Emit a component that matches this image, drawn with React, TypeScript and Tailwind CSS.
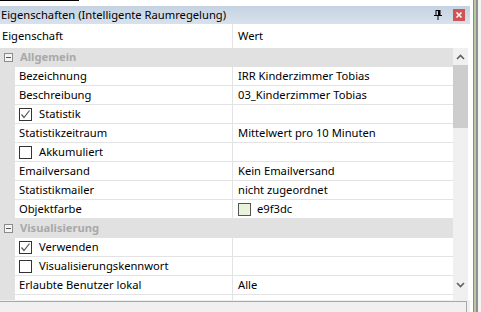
import React from "react";

type Row =
  | { kind: "group"; label: string }
  | { kind: "item"; name: string; value?: string; check?: boolean; color?: string };

const rows: Row[] = [
  { kind: "group", label: "Allgemein" },
  { kind: "item", name: "Bezeichnung", value: "IRR Kinderzimmer Tobias" },
  { kind: "item", name: "Beschreibung", value: "03_Kinderzimmer Tobias" },
  { kind: "item", name: "Statistik", check: true },
  { kind: "item", name: "Statistikzeitraum", value: "Mittelwert pro 10 Minuten" },
  { kind: "item", name: "Akkumuliert", check: false },
  { kind: "item", name: "Emailversand", value: "Kein Emailversand" },
  { kind: "item", name: "Statistikmailer", value: "nicht zugeordnet" },
  { kind: "item", name: "Objektfarbe", value: "e9f3dc", color: "#e9f3dc" },
  { kind: "group", label: "Visualisierung" },
  { kind: "item", name: "Verwenden", check: true },
  { kind: "item", name: "Visualisierungskennwort", check: false },
  { kind: "item", name: "Erlaubte Benutzer lokal", value: "Alle" },
  { kind: "item", name: "", value: "" },
];

function CheckBox({ checked }: { checked: boolean }) {
  return (
    <span className="w-[13px] h-[13px] border border-[#333] bg-white flex items-center justify-center shrink-0">
      {checked && (
        <svg width="11" height="11" viewBox="0 0 11 11">
          <path d="M1.5 5.5 L4 8.5 L9.5 1.5" fill="none" stroke="#555" strokeWidth="1.2" />
        </svg>
      )}
    </span>
  );
}

function Expander() {
  return (
    <span className="w-[9px] h-[9px] border border-[#8c8c8c] bg-[#f4f4f4] flex items-center justify-center">
      <span className="w-[5px] h-px bg-[#555]"></span>
    </span>
  );
}

export default function App() {
  return (
    <div
      className="w-[481px] h-[312px] flex bg-white overflow-hidden text-[11.2px] text-black"
      style={{ fontFamily: '"Noto Sans", sans-serif' }}
    >
      <div className="w-[470px] flex flex-col">
        {/* top strip */}
        <div className="h-[6px] bg-white flex flex-col">
          <div className="w-[79px] h-px bg-black"></div>
        </div>

        {/* title bar */}
        <div className="h-[18px] bg-gradient-to-b from-[#c5d2e2] to-[#d8e2ed] flex items-center pl-[1px] pr-[5px]">
          <span className="flex-1 leading-none">Eigenschaften (Intelligente Raumregelung)</span>
          <svg width="8" height="10" viewBox="0 0 8 10" className="mr-[11px]">
            <rect x="2" y="0.5" width="4" height="5" fill="none" stroke="#000" strokeWidth="1" />
            <rect x="4" y="0.5" width="2" height="5" fill="#000" />
            <rect x="0" y="5" width="8" height="1" fill="#000" />
            <rect x="3.5" y="6" width="1" height="4" fill="#000" />
          </svg>
          <span className="w-[12px] h-[12px] bg-[#d05454] flex items-center justify-center">
            <svg width="6" height="6" viewBox="0 0 6 6">
              <path d="M0.5 0.5 L5.5 5.5 M5.5 0.5 L0.5 5.5" stroke="#fff" strokeWidth="1.5" />
            </svg>
          </span>
        </div>

        {/* header */}
        <div className="h-[24px] flex bg-white">
          <div className="w-[233px] border-r border-[#e5e5e5] flex items-center pl-[2px]">Eigenschaft</div>
          <div className="flex-1 flex items-center pl-[5px]">Wert</div>
        </div>

        {/* body */}
        <div className="h-[252px] flex pr-[2px]">
          <div className="w-[453px] flex flex-col overflow-hidden">
            {rows.map((r, i) =>
              r.kind === "group" ? (
                <div key={i} className="h-[19px] shrink-0 bg-[#e1e1e1] flex items-center">
                  <div className="w-[15px] flex items-center justify-center pl-[1px]">
                    <Expander />
                  </div>
                  <span className="pl-[5px] font-bold text-[#a9a9a9]">{r.label}</span>
                </div>
              ) : (
                <div key={i} className="h-[19px] shrink-0 flex">
                  <div className="w-[15px] bg-[#e1e1e1]"></div>
                  <div className="flex-1 flex border-b border-[#e3e3e3]">
                    <div className="w-[218px] border-r border-[#e3e3e3] flex items-center pl-[4px] gap-[7px] whitespace-nowrap">
                      {r.check !== undefined && <CheckBox checked={r.check} />}
                      <span>{r.name}</span>
                    </div>
                    <div className="flex-1 flex items-center pl-[5px] gap-[6px] whitespace-nowrap">
                      {r.color && (
                        <span
                          className="w-[13px] h-[13px] border border-[#555]"
                          style={{ backgroundColor: r.color }}
                        ></span>
                      )}
                      <span>{r.value}</span>
                    </div>
                  </div>
                </div>
              )
            )}
          </div>

          {/* scrollbar */}
          <div className="w-[15px] bg-[#f0f0f0] flex flex-col">
            <div className="h-[17px] flex items-center justify-center">
              <svg width="9" height="6" viewBox="0 0 9 6">
                <path d="M1 5 L4.5 1.5 L8 5" fill="none" stroke="#606060" strokeWidth="1.6" />
              </svg>
            </div>
            <div className="h-[63px] bg-[#cdcdcd]"></div>
            <div className="flex-1"></div>
            <div className="h-[17px] flex items-center justify-center mb-[7px]">
              <svg width="9" height="6" viewBox="0 0 9 6">
                <path d="M1 1 L4.5 4.5 L8 1" fill="none" stroke="#606060" strokeWidth="1.6" />
              </svg>
            </div>
          </div>
        </div>

        {/* bottom panel */}
        <div className="flex-1 bg-[#f0f0f0] pt-[1px] pr-[3px]">
          <div className="h-full border-t border-r border-[#a8a8a8] bg-[#f0f0f0]"></div>
        </div>
      </div>

      {/* window edge */}
      <div className="flex-1 flex">
        <div className="w-[3px] bg-white"></div>
        <div className="w-px bg-[#8a8a8a]"></div>
        <div className="w-[2px] bg-[#b8c8a0]"></div>
        <div className="w-[2px] bg-[#909090]"></div>
        <div className="flex-1 bg-[#f4f4f4]"></div>
      </div>
    </div>
  );
}
